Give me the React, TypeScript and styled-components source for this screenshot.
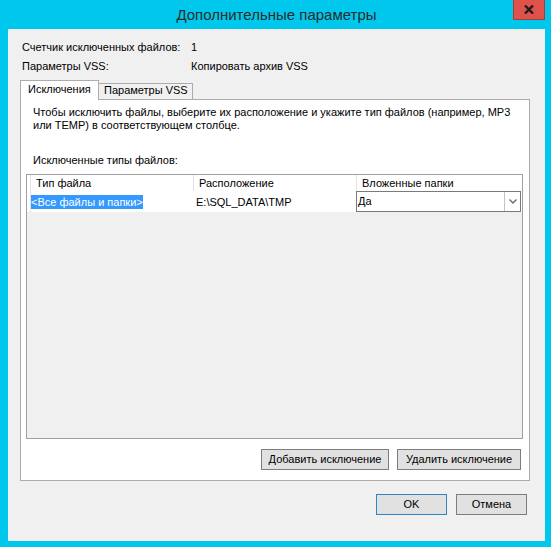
import React from "react";
import styled, { createGlobalStyle } from "styled-components";

const Global = createGlobalStyle`
  html, body { margin: 0; padding: 0; background: #00c8ec; }
  body { font-family: "Liberation Sans", Arial, sans-serif; font-size: 11px; color: #000; }
  * { box-sizing: border-box; }
`;

const Frame = styled.div`
  width: 551px;
  height: 547px;
  background: #00c8ec;
  padding: 0 6px 6px 8px;
  display: flex;
  flex-direction: column;
`;

const TitleBar = styled.div`
  height: 29px;
  flex: none;
  display: grid;
  grid-template-columns: 1fr auto 1fr;
  align-items: start;
`;

const Title = styled.div`
  grid-column: 2;
  font-size: 15px;
  line-height: 29px;
  color: #2b2b2b;
  white-space: nowrap;
`;

const CloseButton = styled.button`
  grid-column: 3;
  justify-self: end;
  width: 32px;
  height: 20px;
  margin: 0;
  padding: 0;
  background: #df524b;
  border: 1px solid #a83c37;
  border-top: none;
  display: flex;
  align-items: center;
  justify-content: center;
`;

const Client = styled.div`
  flex: 1;
  background: #f0f0f0;
  padding: 12px 15px 0 12px;
  display: flex;
  flex-direction: column;
`;

const InfoGrid = styled.div`
  display: grid;
  grid-template-columns: 169px 1fr;
  row-gap: 6px;
  padding-left: 2px;
  line-height: 13px;
  white-space: nowrap;
`;

const Tabs = styled.div`
  margin-top: 7px;
  display: flex;
  flex-direction: column;
`;

const TabStrip = styled.div`
  display: flex;
  align-items: flex-end;
  height: 19px;
`;

const Tab = styled.div<{ $active?: boolean }>`
  position: relative;
  line-height: 13px;
  white-space: nowrap;
  border: 1px solid #acacac;
  border-bottom: none;
  ${(p) =>
    p.$active
      ? `
    width: 79px;
    height: 20px;
    margin-bottom: -1px;
    z-index: 1;
    background: #fff;
    padding: 2px 0 0 7px;
  `
      : `
    width: 94px;
    height: 16px;
    border-left: none;
    background: #f0f0f0;
    padding: 0 0 0 5px;
  `}
`;

const Panel = styled.div`
  width: 510px;
  height: 382px;
  border: 1px solid #acacac;
  background: #fff;
  padding-top: 6px;
  display: flex;
  flex-direction: column;
`;

const Description = styled.p`
  margin: 0;
  padding-left: 12px;
  line-height: 13px;
  white-space: nowrap;
`;

const SectionLabel = styled.div`
  margin-top: 22px;
  padding-left: 12px;
  line-height: 13px;
`;

const GridBox = styled.div`
  margin: 7px 0 0 5px;
  width: 497px;
  height: 265px;
  border: 1px solid #a0a0a0;
  background: #f0f0f0;
`;

const GridRow = styled.div<{ $header?: boolean }>`
  display: grid;
  grid-template-columns: 3px 163px 163px 1fr;
  height: ${(p) => (p.$header ? "16px" : "21px")};
  background: #fff;
`;

const HeaderCell = styled.div<{ $lead?: boolean }>`
  border-left: ${(p) => (p.$lead ? "none" : "1px solid #e3e3e3")};
  padding-left: 5px;
  line-height: 16px;
  white-space: nowrap;
`;

const Cell = styled.div<{ $divider?: boolean; $pad?: number }>`
  display: flex;
  align-items: center;
  border-left: ${(p) => (p.$divider ? "1px solid #e3e3e3" : "none")};
  padding-left: ${(p) => p.$pad ?? 0}px;
  white-space: nowrap;
`;

const Selected = styled.span`
  display: inline-block;
  background: #3399ff;
  color: #fff;
  line-height: 14px;
`;

const Combo = styled.div`
  width: 165px;
  height: 21px;
  border: 1px solid #7a7a7a;
  background: #fff;
  display: flex;
`;

const ComboText = styled.div`
  flex: 1;
  padding-left: 1px;
  line-height: 19px;
`;

const ComboArrow = styled.div`
  width: 16px;
  border-left: 1px solid #c3c3c3;
  display: flex;
  align-items: center;
  justify-content: center;
`;

const ButtonRow = styled.div<{ $gap: number; $top: number; $right: number }>`
  display: flex;
  justify-content: flex-end;
  gap: ${(p) => p.$gap}px;
  margin-top: ${(p) => p.$top}px;
  padding-right: ${(p) => p.$right}px;
`;

const WinButton = styled.button<{ $w: number; $default?: boolean }>`
  width: ${(p) => p.$w}px;
  height: 21px;
  margin: 0;
  padding: 0;
  font-family: "Liberation Sans", Arial, sans-serif;
  font-size: 11px;
  line-height: 19px;
  color: #000;
  background: #e1e1e1;
  border: 1px solid ${(p) => (p.$default ? "#2f86c4" : "#7d7d7d")};
  white-space: nowrap;
`;

export default function App() {
  return (
    <>
      <Global />
      <Frame>
        <TitleBar>
          <Title>Дополнительные параметры</Title>
          <CloseButton aria-label="Закрыть">
            <svg width="10" height="9" viewBox="0 0 10 9">
              <path d="M1 0.5 L9 8.5 M9 0.5 L1 8.5" stroke="#1c1c1c" strokeWidth="2.4" />
            </svg>
          </CloseButton>
        </TitleBar>
        <Client>
          <InfoGrid>
            <span>Счетчик исключенных файлов:</span>
            <span>1</span>
            <span>Параметры VSS:</span>
            <span>Копировать архив VSS</span>
          </InfoGrid>
          <Tabs>
            <TabStrip>
              <Tab $active>Исключения</Tab>
              <Tab>Параметры VSS</Tab>
            </TabStrip>
            <Panel>
              <Description>
                Чтобы исключить файлы, выберите их расположение и укажите тип файлов (например, MP3
                <br />
                или TEMP) в соответствующем столбце.
              </Description>
              <SectionLabel>Исключенные типы файлов:</SectionLabel>
              <GridBox>
                <GridRow $header>
                  <HeaderCell $lead />
                  <HeaderCell>Тип файла</HeaderCell>
                  <HeaderCell>Расположение</HeaderCell>
                  <HeaderCell>Вложенные папки</HeaderCell>
                </GridRow>
                <GridRow>
                  <Cell />
                  <Cell $divider>
                    <Selected>&lt;Все файлы и папки&gt;</Selected>
                  </Cell>
                  <Cell $pad={3}>E:\SQL_DATA\TMP</Cell>
                  <Cell>
                    <Combo>
                      <ComboText>Да</ComboText>
                      <ComboArrow>
                        <svg width="8" height="5" viewBox="0 0 8 5">
                          <path d="M0.5 0.5 L4 4 L7.5 0.5" fill="none" stroke="#6a6a6a" strokeWidth="1.4" />
                        </svg>
                      </ComboArrow>
                    </Combo>
                  </Cell>
                </GridRow>
              </GridBox>
              <ButtonRow $gap={8} $top={10} $right={8}>
                <WinButton $w={128}>Добавить исключение</WinButton>
                <WinButton $w={124}>Удалить исключение</WinButton>
              </ButtonRow>
            </Panel>
          </Tabs>
          <ButtonRow $gap={9} $top={13} $right={3}>
            <WinButton $w={71} $default>
              OK
            </WinButton>
            <WinButton $w={71}>Отмена</WinButton>
          </ButtonRow>
        </Client>
      </Frame>
    </>
  );
}
